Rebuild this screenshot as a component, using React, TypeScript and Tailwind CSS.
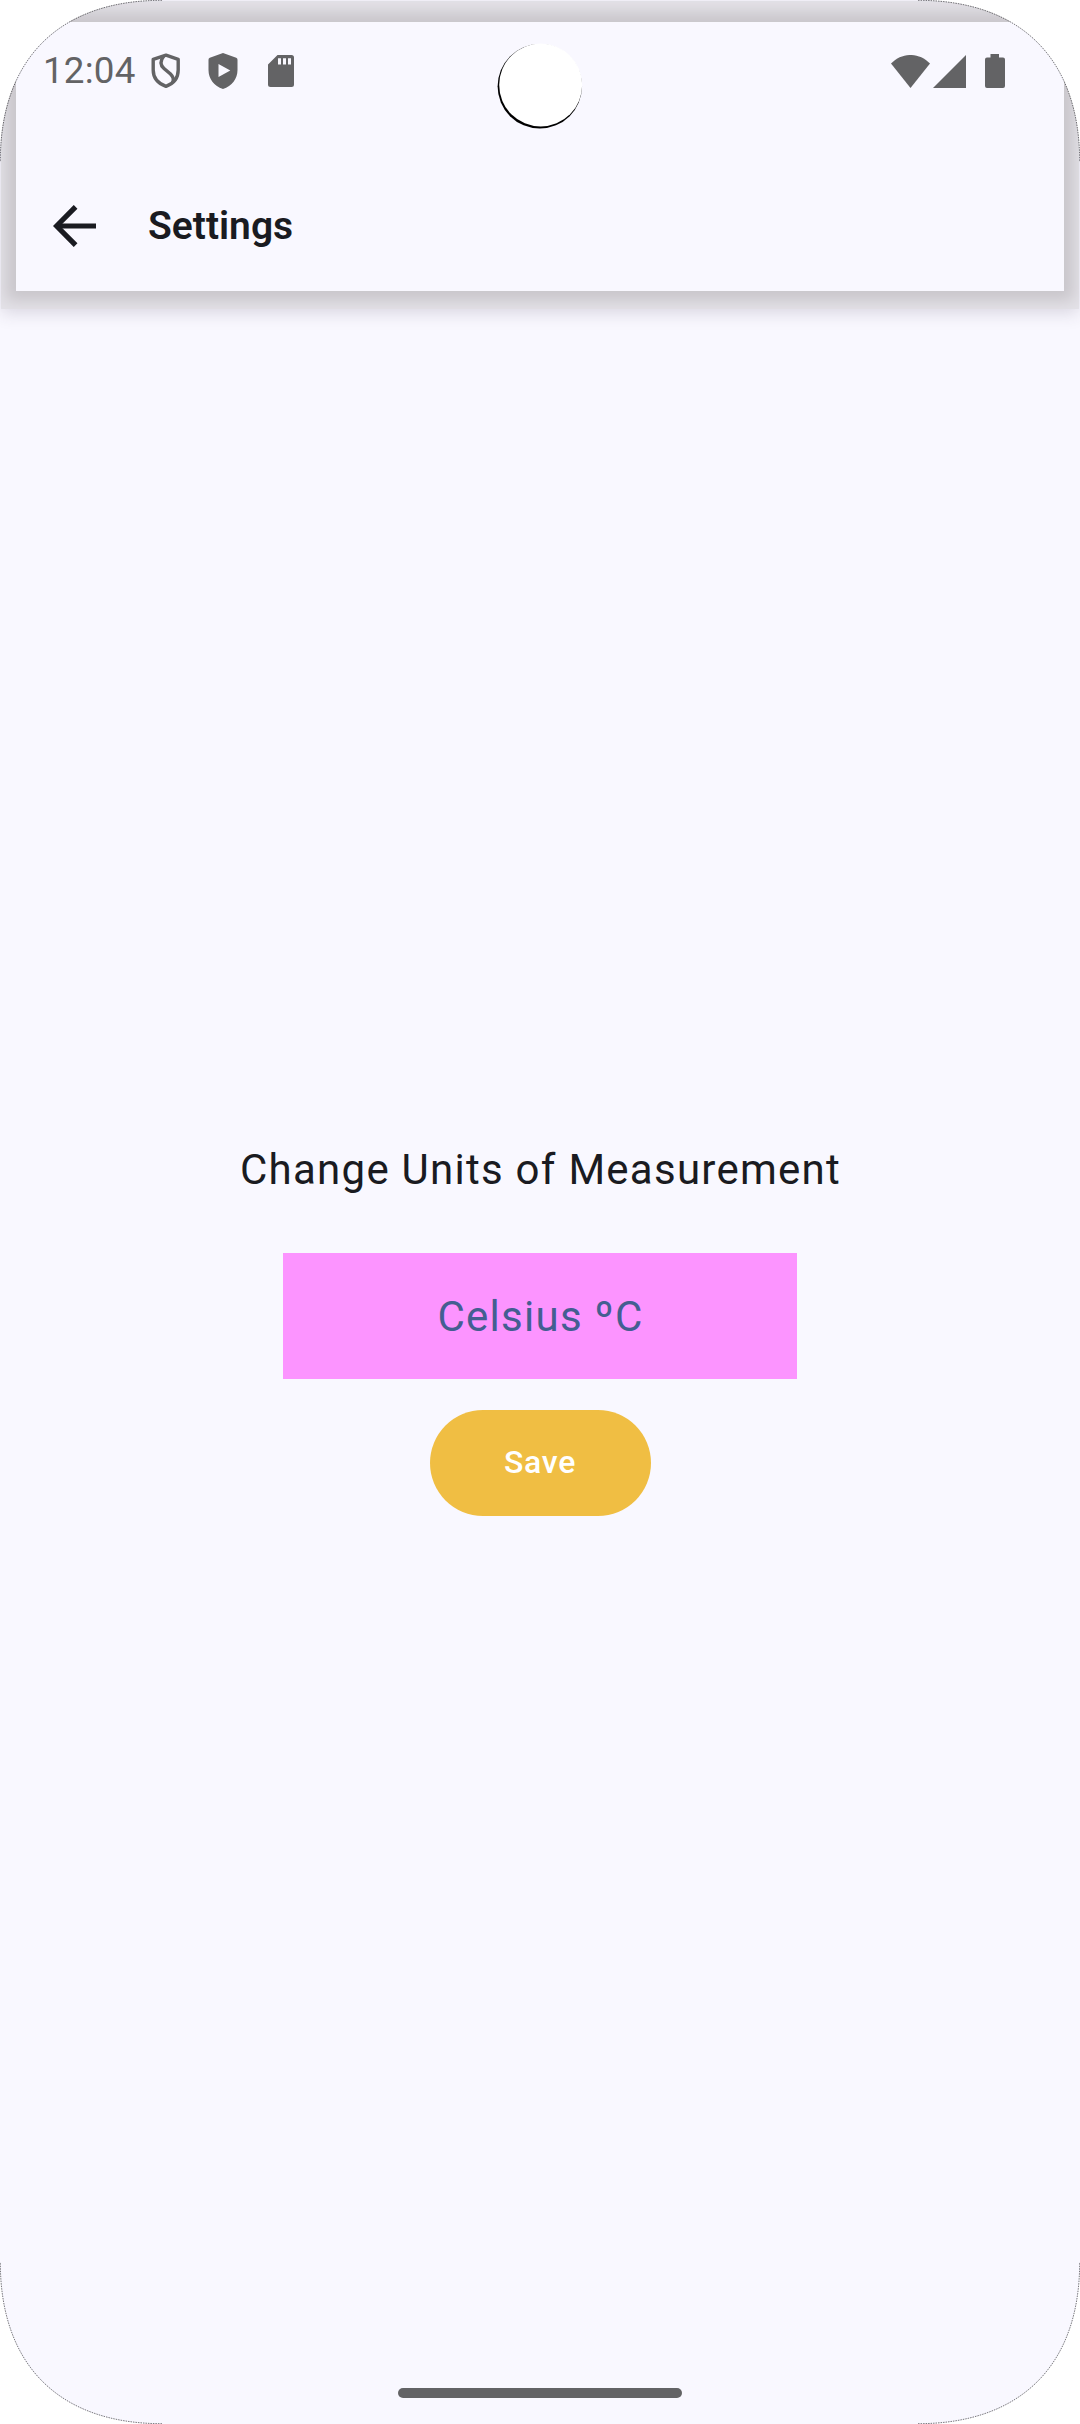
import React from "react";

function ShieldOutlineIcon() {
  return (
    <svg className="ml-[15px] h-9 w-8 shrink-0" viewBox="0 0 32 36" fill="none" stroke="#636365" strokeWidth="3.4">
      <path d="M16 2.2 L28.2 6.4 V17 C28.2 25 23.5 30.6 16 33.4 C8.5 30.6 3.2 25 3.2 17 V6.4 Z" strokeLinejoin="round" />
      <path d="M13.8 3 C10 8 10.5 12.5 14 15.5 L20.5 21 C23.5 24 24 27 22.5 29.5" />
    </svg>
  );
}

function ShieldPlayIcon() {
  return (
    <svg className="ml-[25px] h-9 w-8 shrink-0" viewBox="0 0 32 36">
      <path
        fill="#636365"
        fillRule="evenodd"
        d="M16 0 L29.2 4.8 Q30.5 5.4 30.5 6.8 V17 C30.5 26 25 32.8 16 36 C7 32.8 1.5 26 1.5 17 V6.8 Q1.5 5.4 2.8 4.8 Z M11.5 11 V24 L23.3 17.5 Z"
      />
    </svg>
  );
}

function SdCardIcon() {
  return (
    <svg className="ml-[29px] h-8 w-[26px] shrink-0" viewBox="0 0 26 32">
      <path
        fill="#636365"
        fillRule="evenodd"
        d="M9.5 0 H23.5 Q26 0 26 2.5 V29.5 Q26 32 23.5 32 H2.5 Q0 32 0 29.5 V9.5 Z M10 3.3 V9.5 H13 V3.3 Z M15 3.3 V9.5 H18 V3.3 Z M20 3.3 V9.5 H23 V3.3 Z"
      />
    </svg>
  );
}

function StatusBar() {
  return (
    <div className="flex h-[98px] items-center pl-[27px] pr-[59px] text-[#636365]">
      <span className="w-[92px] text-[36.75px] leading-none tracking-[0.2px] whitespace-nowrap">12:04</span>
      <ShieldOutlineIcon />
      <ShieldPlayIcon />
      <SdCardIcon />
      <div className="ml-auto flex items-center">
        <svg className="h-[33px] w-[39px]" viewBox="0 0 39 33">
          <path fill="#636365" d="M0 8.6 C11 -2.9 28 -2.9 39 8.6 L19.5 33 Z" />
        </svg>
        <svg className="ml-[3px] h-[33px] w-[33px]" viewBox="0 0 33 33">
          <path fill="#636365" d="M33 0 V33 H0 Z" />
        </svg>
        <svg className="ml-[19px] h-[34px] w-5" viewBox="0 0 20 34">
          <path
            fill="#636365"
            d="M5.5 0 H14 V3.5 H18 Q20 3.5 20 5.5 V32 Q20 34 18 34 H2 Q0 34 0 32 V5.5 Q0 3.5 2 3.5 H5.5 Z"
          />
        </svg>
      </div>
    </div>
  );
}

function AppBar() {
  return (
    <header className="mx-px mt-px h-[308px] shadow-[0_4px_16px_rgba(60,50,70,0.17)]">
      <div className="h-full overflow-hidden bg-[#e4e2e8] px-[15px] pt-[21px] pb-[18px]">
        <div className="h-full bg-[#f9f8ff] shadow-[0_0_14px_10px_#c9c6cb]">
          <StatusBar />
          <div className="flex h-[171px] items-center pl-[37px] pt-[41px]">
            <svg className="h-[42px] w-[43px]" viewBox="0 0 43 42" fill="none" stroke="#1a1b21" strokeWidth="5.2">
              <path d="M43 21 H4" />
              <path d="M22.6 1.8 L3.6 21 L22.6 40.2" />
            </svg>
            <h1 className="ml-[52px] text-[39px] font-semibold leading-none text-[#1a1b21]">Settings</h1>
          </div>
        </div>
      </div>
    </header>
  );
}

const CORNERS = [
  "top-0 left-0",
  "top-0 right-0 -scale-x-100",
  "bottom-0 left-0 -scale-y-100",
  "bottom-0 right-0 -scale-100",
];

function ScreenCorners() {
  return (
    <>
      {CORNERS.map((position) => (
        <svg key={position} className={"absolute h-[162px] w-[162px] " + position} viewBox="0 0 162 162">
          <path fill="#ffffff" d="M0 0 H162 C59 0 0 59 0 162 Z" />
          <path
            fill="none"
            stroke="#111114"
            strokeWidth="0.8"
            strokeOpacity="0.7"
            strokeDasharray="1.5 1"
            d="M162 0.3 C59 0.3 0.3 59 0.3 162"
          />
        </svg>
      ))}
    </>
  );
}

function CameraCutout() {
  return (
    <svg className="absolute left-[496px] top-[42px] h-[88px] w-[88px]" viewBox="0 0 88 88">
      <circle cx="43.8" cy="44.3" r="42.2" fill="#000000" />
      <circle cx="44.7" cy="43" r="41.5" fill="#ffffff" />
    </svg>
  );
}

export default function App() {
  return (
    <div className="relative flex h-[2424px] w-[1080px] flex-col overflow-hidden bg-[#f9f8ff] font-['Roboto',sans-serif]">
      <AppBar />
      <main className="flex flex-1 flex-col items-center pt-[829px]">
        <p className="h-[63px] whitespace-nowrap pl-[1px] text-[42px] leading-[63px] tracking-[1.26px] text-[#1a1b21]">
          Change Units of Measurement
        </p>
        <button className="mt-[52px] h-[126px] w-[514px] bg-[#fc94ff] pl-[1px] text-[42px] tracking-[1.26px] text-[#445e91]">
          Celsius ºC
        </button>
        <button className="mt-[31px] h-[106px] w-[221px] rounded-full bg-[#f0be43] pb-[2px] text-[32px] font-medium tracking-[0.7px] text-white">
          Save
        </button>
      </main>
      <div className="mb-[26px] h-[10px] w-[284px] self-center rounded-full bg-[#636365]" />
      <CameraCutout />
      <ScreenCorners />
    </div>
  );
}
